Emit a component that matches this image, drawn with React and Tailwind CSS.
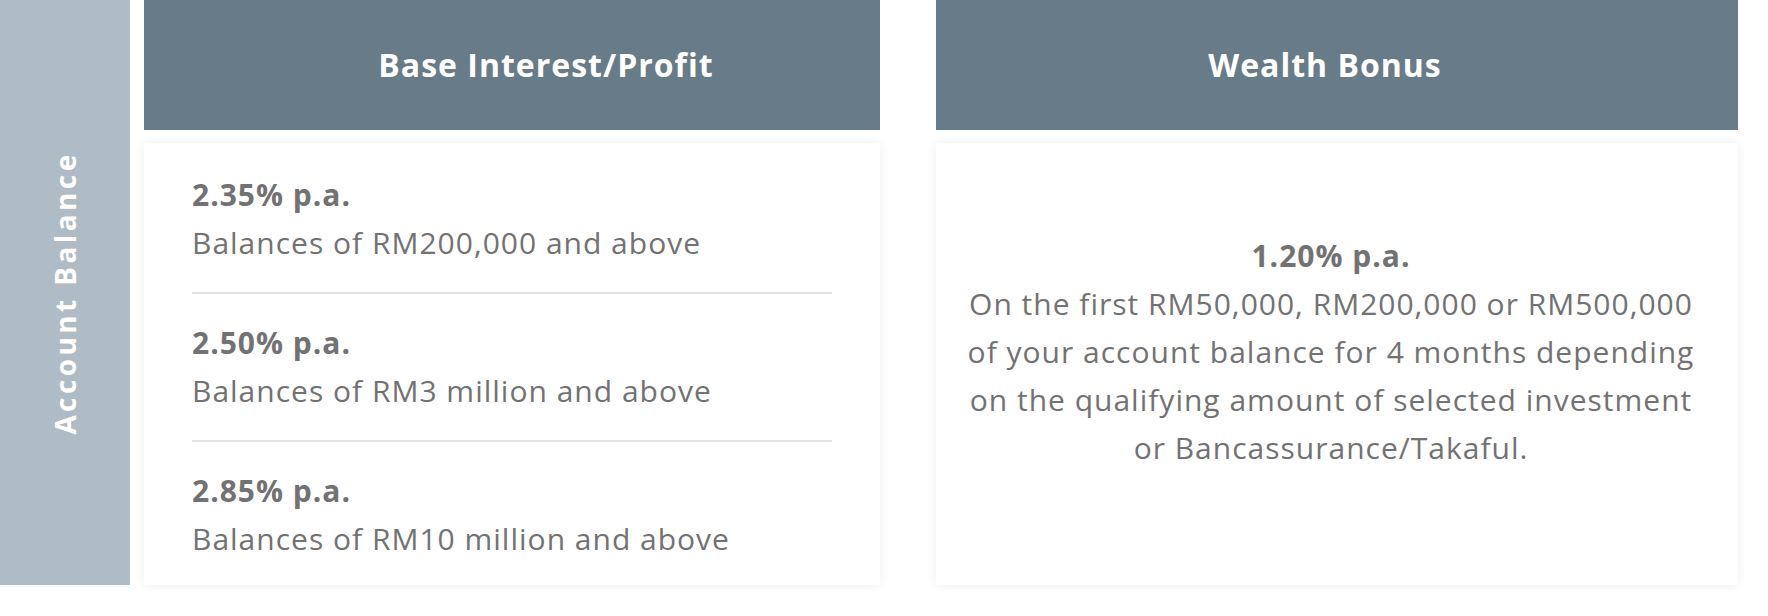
import React from "react";

const rows = [
  { rate: "2.35% p.a.", desc: "Balances of RM200,000 and above" },
  { rate: "2.50% p.a.", desc: "Balances of RM3 million and above" },
  { rate: "2.85% p.a.", desc: "Balances of RM10 million and above" },
];

export default function App() {
  return (
    <div
      className="w-[1768px] h-[616px] bg-white flex"
      style={{ fontFamily: '"Open Sans", "Liberation Sans", sans-serif' }}
    >
      <div className="w-[130px] h-[585px] bg-[#afbcc5] flex items-center justify-center shrink-0">
        <div className="-rotate-90 whitespace-nowrap text-white font-bold text-[28px] tracking-[3.4px]">
          Account Balance
        </div>
      </div>
      <div className="ml-[14px] w-[736px] flex flex-col">
        <div className="h-[130px] bg-[#677b88] flex items-center justify-center pl-[68px] text-white font-bold text-[32px] tracking-[1px]">
          Base Interest/Profit
        </div>
        <div className="mt-[13px] h-[442px] bg-white shadow-[0_0_10px_rgba(0,0,0,0.07)] px-[48px] pt-[28px] text-[#727272] text-[30px] leading-[48px] tracking-[1px]">
          {rows.map((r, i) => (
            <div
              key={i}
              className={
                i < rows.length - 1
                  ? "pb-[25px] mb-[25px] border-b-2 border-[#e2e2e2]"
                  : ""
              }
            >
              <div className="font-bold">{r.rate}</div>
              <div>{r.desc}</div>
            </div>
          ))}
        </div>
      </div>
      <div className="ml-[56px] w-[802px] flex flex-col">
        <div className="h-[130px] bg-[#677b88] flex items-center justify-center pr-[24px] text-white font-bold text-[32px] tracking-[1px]">
          Wealth Bonus
        </div>
        <div className="mt-[13px] h-[442px] bg-white shadow-[0_0_10px_rgba(0,0,0,0.07)] flex flex-col items-center justify-center pb-[24px] pr-[12px] text-center text-[#727272] text-[30px] leading-[48px] tracking-[1px]">
          <div className="font-bold">1.20% p.a.</div>
          <div>
            On the first RM50,000, RM200,000 or RM500,000
            <br />
            of your account balance for 4 months depending
            <br />
            on the qualifying amount of selected investment
            <br />
            or Bancassurance/Takaful.
          </div>
        </div>
      </div>
    </div>
  );
}
